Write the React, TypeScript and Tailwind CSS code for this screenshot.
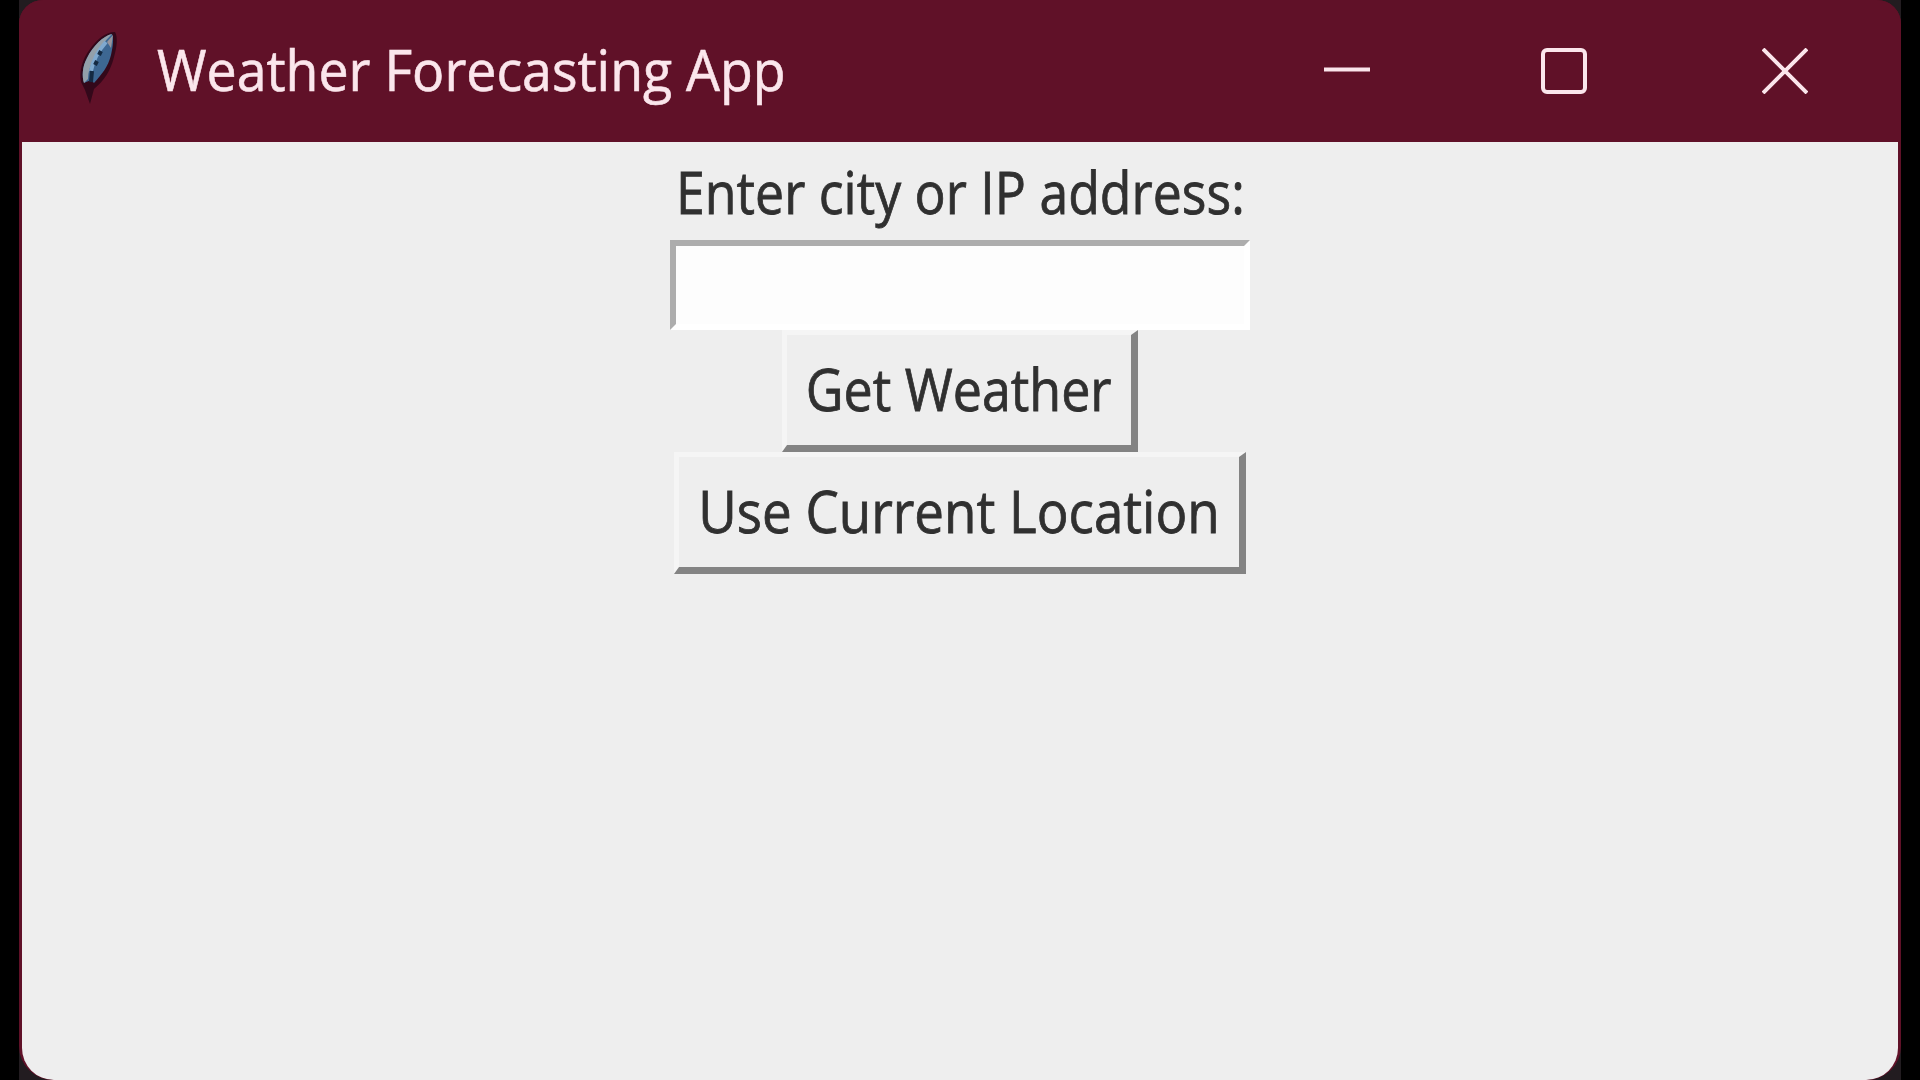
import type { ReactNode } from "react";

function Feather() {
  return (
    <svg className="h-[76px] w-[40px] shrink-0" viewBox="0 0 40 76" fill="none">
      <path d="M36 1 C27 1 18 8 11 18 C3 28 0 41 2 51 L6 59 L11 73 L15 58 C25 50 32 39 35 26 C38 16 39 6 36 1Z" fill="#33081a" />
      <path d="M33 3 C24 5 14 15 8 27 C3 36 3 46 5 52 L12 49 L15 52 C23 43 29 36 32 24 C34 15 35 8 33 3Z" fill="#3d6792" />
      <path d="M33 3 C24 5 14 15 8 27 C3 36 3 46 5 52 L9 48 C9 35 19 16 33 3Z" fill="#93a0aa" />
      <path d="M27 11 C19 20 14 29 12 40" stroke="#7fa9cf" strokeWidth="4" />
      <path d="M22 20 L20 24 M18 30 L16 34 M13 40 L12 51" stroke="#142a42" strokeWidth="4" />
      <path d="M28 11 L34 4 L32 17Z" fill="#98949c" />
    </svg>
  );
}

function TitleBar() {
  return (
    <header className="flex h-[142px] items-start bg-[#601128] text-[#fbe6ec]">
      <div className="ml-[60px] mt-[31px]">
        <Feather />
      </div>
      <h1 className="ml-[38px] mt-[29px] w-[640px] origin-left scale-x-[0.941] whitespace-nowrap text-[57px] leading-[80px] [-webkit-text-stroke:0.6px_#fbe6ec]">
        Weather Forecasting App
      </h1>
      <div className="ml-auto mr-[93px] mt-[48px] flex">
        <svg className="mr-[171px] h-[46px] w-[46px]" viewBox="0 0 46 46" fill="none" stroke="currentColor">
          <path d="M0 21.5H46" strokeWidth="4" />
        </svg>
        <svg className="mr-[175px] h-[46px] w-[46px]" viewBox="0 0 46 46" fill="none" stroke="currentColor">
          <rect x="2" y="2" width="42" height="42" rx="4" strokeWidth="4" />
        </svg>
        <svg className="h-[46px] w-[46px]" viewBox="0 0 46 46" fill="none" stroke="currentColor">
          <path d="M1 1L45 45M45 1L1 45" strokeWidth="4" />
        </svg>
      </div>
    </header>
  );
}

function TkButton({ size, children }: { size: string; children: ReactNode }) {
  return (
    <button
      className={`flex h-[122px] items-start justify-center border-b-[7px] border-l-[5px] border-r-[7px] border-t-[5px] border-b-[#838383] border-l-[#f5f5f5] border-r-[#838383] border-t-[#f5f5f5] ${size}`}
    >
      {children}
    </button>
  );
}

export default function App() {
  return (
    <div className="flex h-[1080px] w-[1920px] justify-center overflow-hidden bg-black font-['Open_Sans',sans-serif]">
      <div className="h-full w-[1882px] bg-[#221c20]">
        <div className="flex h-full flex-col overflow-hidden rounded-b-[34px] rounded-t-[24px] bg-[#601128]">
          <TitleBar />
          <main className="mx-[3px] flex flex-1 flex-col items-center rounded-b-[32px] bg-[#eeeeee] text-[#303030] [-webkit-text-stroke:0.8px_#303030]">
            <label className="mt-[10px] flex h-[88px] w-[570px] justify-center whitespace-nowrap text-[58px] leading-[80px]">
              <span className="scale-x-[0.893]">Enter city or IP address:</span>
            </label>
            <input
              className="h-[90px] w-[580px] border-b-[6px] border-l-[6px] border-r-[6px] border-t-[6px] border-b-white border-l-[#adadad] border-r-white border-t-[#adadad] bg-[#fdfdfd] outline-none"
              aria-label="City or IP address"
            />
            <TkButton size="w-[356px]">
              <span className="scale-x-[0.896] whitespace-nowrap text-[58px] leading-[108px]">Get Weather</span>
            </TkButton>
            <TkButton size="w-[572px]">
              <span className="scale-x-[0.912] whitespace-nowrap text-[58px] leading-[108px]">Use Current Location</span>
            </TkButton>
          </main>
        </div>
      </div>
    </div>
  );
}
